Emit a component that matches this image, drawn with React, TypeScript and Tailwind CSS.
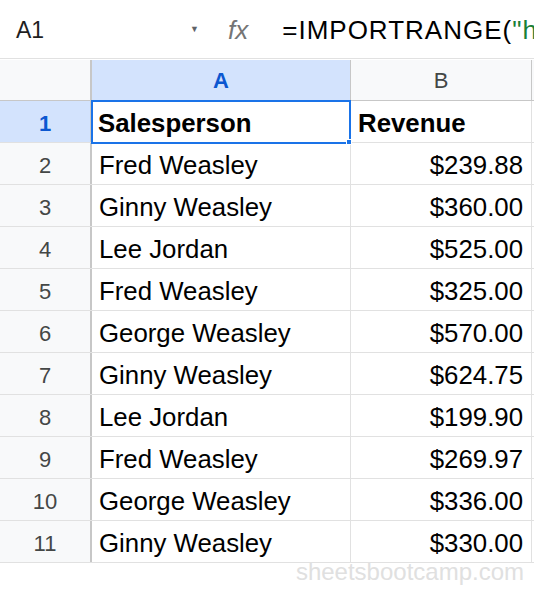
import React from 'react'

const rows: [string, string][] = [
  ['Fred Weasley', '$239.88'],
  ['Ginny Weasley', '$360.00'],
  ['Lee Jordan', '$525.00'],
  ['Fred Weasley', '$325.00'],
  ['George Weasley', '$570.00'],
  ['Ginny Weasley', '$624.75'],
  ['Lee Jordan', '$199.90'],
  ['Fred Weasley', '$269.97'],
  ['George Weasley', '$336.00'],
  ['Ginny Weasley', '$330.00'],
]

function RowHeader({ n, active }: { n: number; active?: boolean }) {
  return (
    <div
      className={`w-[92px] shrink-0 flex items-center justify-center pt-[3px] border-r-2 border-r-[#c7c7c7] text-[22px] ${
        active ? 'bg-[#d3e3fd] text-[#0b57d0] font-bold' : 'bg-[#f8f9fa] text-[#444746]'
      }`}
    >
      {n}
    </div>
  )
}

export default function App() {
  return (
    <div className="relative w-[534px] h-[590px] overflow-hidden bg-white font-['Liberation_Sans',Arial,sans-serif] text-black">
      {/* formula bar */}
      <div className="h-[58px] flex items-center whitespace-nowrap pt-[2px]">
        <div className="w-[212px] shrink-0 flex items-center justify-between pl-4 pr-[13px]">
          <span className="text-[23px] text-[#1f1f1f]">A1</span>
          <span className="text-[9px] text-[#5f6368]">▼</span>
        </div>
        <div className="w-[2px] h-[28px] bg-[#e3e3e3]" />
        <span className="ml-[16px] text-[26px] italic text-[#757575]">fx</span>
        {/* the formula runs past the window edge, as in the sheet */}
        <span className="ml-[34px] text-[26px] tracking-[1px]">
          =IMPORTRANGE(<span className="text-[#188038]">"h</span>
        </span>
      </div>

      {/* column headers */}
      <div className="h-[43px] flex border-t border-b border-t-[#e1e1e1] border-b-[#c7c7c7] pt-[1px]">
        <div className="w-[92px] shrink-0 bg-[#f8f9fa] border-r-2 border-r-[#c7c7c7]" />
        <div className="w-[259px] shrink-0 flex items-center justify-center bg-[#d3e3fd] border-r border-r-[#c7c7c7] text-[22px] font-bold text-[#0b57d0]">
          A
        </div>
        <div className="w-[181px] shrink-0 flex items-center justify-center bg-[#f8f9fa] border-r border-r-[#c7c7c7] text-[22px] text-[#444746]">
          B
        </div>
        <div className="flex-1 bg-[#f8f9fa]" />
      </div>

      {/* row 1 */}
      <div className="h-[42px] flex border-b border-b-[#e1e1e1] text-[25.8px] font-bold">
        <RowHeader n={1} active />
        <div className="relative w-[259px] shrink-0 flex items-center pl-[6px] pt-[3px] border-r border-r-[#e1e1e1]">
          Salesperson
          <div className="absolute -left-[1px] -top-[1px] -right-[1px] -bottom-[2px] border-2 border-[#1a73e8]" />
          <div className="absolute -right-[2px] -bottom-[3px] w-[6px] h-[6px] bg-[#1a73e8] border border-white" />
        </div>
        <div className="w-[181px] shrink-0 flex items-center pl-[7px] pt-[3px] border-r border-r-[#e1e1e1]">
          Revenue
        </div>
        <div className="flex-1" />
      </div>

      {rows.map(([name, rev], i) => (
        <div key={i} className="h-[42px] flex border-b border-b-[#e1e1e1] text-[25.8px]">
          <RowHeader n={i + 2} />
          <div className="w-[259px] shrink-0 flex items-center pl-[7px] pt-[3px] border-r border-r-[#e1e1e1]">
            {name}
          </div>
          <div className="w-[181px] shrink-0 flex items-center justify-end pr-[8px] pt-[3px] border-r border-r-[#e1e1e1]">
            {rev}
          </div>
          <div className="flex-1" />
        </div>
      ))}

      <div className="absolute right-[10px] top-[554px] text-[24px] text-[#e0e0e0]">
        sheetsbootcamp.com
      </div>
    </div>
  )
}
